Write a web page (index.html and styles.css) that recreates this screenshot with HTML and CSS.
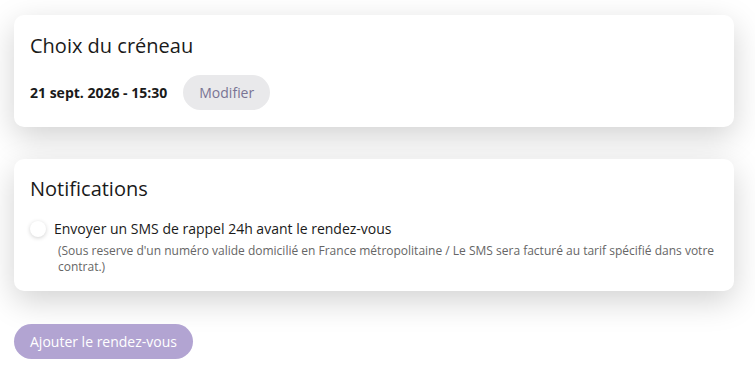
FILE: index.html
```
<!DOCTYPE html>
<html lang="fr">
<head>
<meta charset="utf-8">
<link rel="stylesheet" href="styles.css">
</head>
<body>
<div class="page">
  <section class="card">
    <h2 class="card-title">Choix du créneau</h2>
    <div class="slot-row">
      <span class="slot-date">21 sept. 2026 - 15:30</span>
      <button class="btn-secondary">Modifier</button>
    </div>
  </section>
  <section class="card card-notif">
    <h2 class="card-title">Notifications</h2>
    <label class="check-row">
      <span class="check-circle"></span>
      <span class="check-label">Envoyer un SMS de rappel 24h avant le rendez-vous</span>
    </label>
    <p class="check-note">(Sous reserve d'un numéro valide domicilié en France métropolitaine / Le SMS sera facturé au tarif spécifié dans votre contrat.)</p>
  </section>
  <button class="btn-primary">Ajouter le rendez-vous</button>
</div>
</body>
</html>
```
FILE: styles.css
```
* { box-sizing: border-box; }
html, body { margin: 0; padding: 0; background: #fff; }
body {
  font-family: "Open Sans", "Noto Sans", sans-serif;
  color: #1a1a1a;
}
.page {
  width: 720px;
  margin-left: 14px;
  padding-top: 15px;
  display: flex;
  flex-direction: column;
  align-items: flex-start;
}
.card {
  width: 720px;
  background: #fff;
  border-radius: 10px;
  box-shadow: 0 10px 32px rgba(0,0,0,0.18);
  padding: 17px 16px 17px;
}
.card-notif {
  margin-top: 32px;
  padding-top: 16px;
  padding-bottom: 16px;
}
.card-title {
  margin: 0;
  font-size: 20px;
  font-weight: 400;
  line-height: 27px;
  color: #1a1a1a;
}
.slot-row {
  display: flex;
  align-items: center;
  gap: 16px;
  margin-top: 16px;
}
.slot-date {
  font-size: 14px;
  font-weight: 700;
  color: #1a1a1a;
}
.btn-secondary {
  font-family: inherit;
  font-size: 14px;
  color: #797494;
  background: #e9e9eb;
  border: none;
  border-radius: 18px;
  height: 35px;
  padding: 0 16px;
}
.check-row {
  display: flex;
  align-items: center;
  gap: 8px;
  margin-top: 17px;
}
.check-circle {
  width: 16px;
  height: 16px;
  border-radius: 50%;
  background: #fff;
  box-shadow: 0 1px 4px rgba(0,0,0,0.18);
}
.check-label {
  font-size: 14px;
  line-height: 19px;
  color: #1a1a1a;
}
.check-note {
  margin: 5px 0 0 28px;
  font-size: 12px;
  line-height: 16px;
  color: #666;
}
.btn-primary {
  margin-top: 33px;
  font-family: inherit;
  font-size: 14px;
  color: #fff;
  background: #b2a4d2;
  border: none;
  border-radius: 18px;
  height: 35px;
  padding: 0 16px;
}
```
